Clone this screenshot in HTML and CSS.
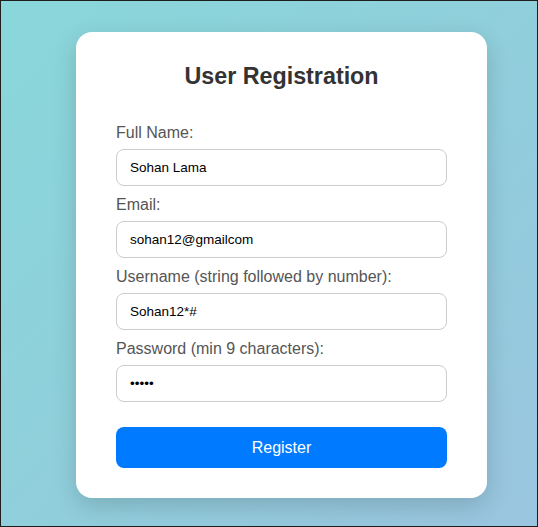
FILE: index.html
```html
<!DOCTYPE html>
<html lang="en">
<head>
<meta charset="utf-8">
<title>User Registration</title>
<link rel="stylesheet" href="styles.css">
</head>
<body>
  <div class="card">
    <h2 class="title">User Registration</h2>
    <form class="form">
      <label class="label" for="fullname">Full Name:</label>
      <input class="input" id="fullname" type="text" value="Sohan Lama">
      <label class="label" for="email">Email:</label>
      <input class="input" id="email" type="text" value="sohan12@gmailcom">
      <label class="label" for="username">Username (string followed by number):</label>
      <input class="input" id="username" type="text" value="Sohan12*#">
      <label class="label" for="password">Password (min 9 characters):</label>
      <input class="input" id="password" type="password" value="12345">
      <button class="button" type="button">Register</button>
    </form>
  </div>
</body>
</html>
```
FILE: styles.css
```css
* {
  box-sizing: border-box;
}
html {
  height: 100%;
}
body {
  margin: 0;
  height: 527px;
  border: 1px solid #1e1e1e;
  padding: 31px 0 0 75px;
  background: linear-gradient(135deg, #89d7da 0%, #8fd0db 45%, #9ac5e0 100%);
  font-family: "Liberation Sans", Arial, sans-serif;
}
.card {
  width: 411px;
  background: #fff;
  border-radius: 16px;
  padding: 31px 40px 30px;
  box-shadow: 0 8px 24px rgba(0, 0, 0, 0.16);
}
.title {
  margin: 0 0 34px;
  text-align: center;
  font-size: 23.3px;
  line-height: 27px;
  font-weight: bold;
  color: #333;
}
.form {
  display: flex;
  flex-direction: column;
}
.label {
  display: block;
  font-size: 16px;
  color: #555;
  margin-bottom: 7px;
}
.input {
  width: 100%;
  height: 37px;
  padding: 0 12px 0 13px;
  border: 1px solid #ccc;
  border-radius: 8px;
  font-family: "Liberation Sans", Arial, sans-serif;
  font-size: 13.5px;
  color: #000;
  margin-bottom: 10px;
  outline: none;
}
.input:last-of-type {
  margin-bottom: 0;
}
.button {
  margin-top: 25px;
  width: 100%;
  height: 41px;
  border: none;
  border-radius: 8px;
  background: #007bff;
  color: #fff;
  font-family: "Liberation Sans", Arial, sans-serif;
  font-size: 16px;
  cursor: pointer;
}
```
